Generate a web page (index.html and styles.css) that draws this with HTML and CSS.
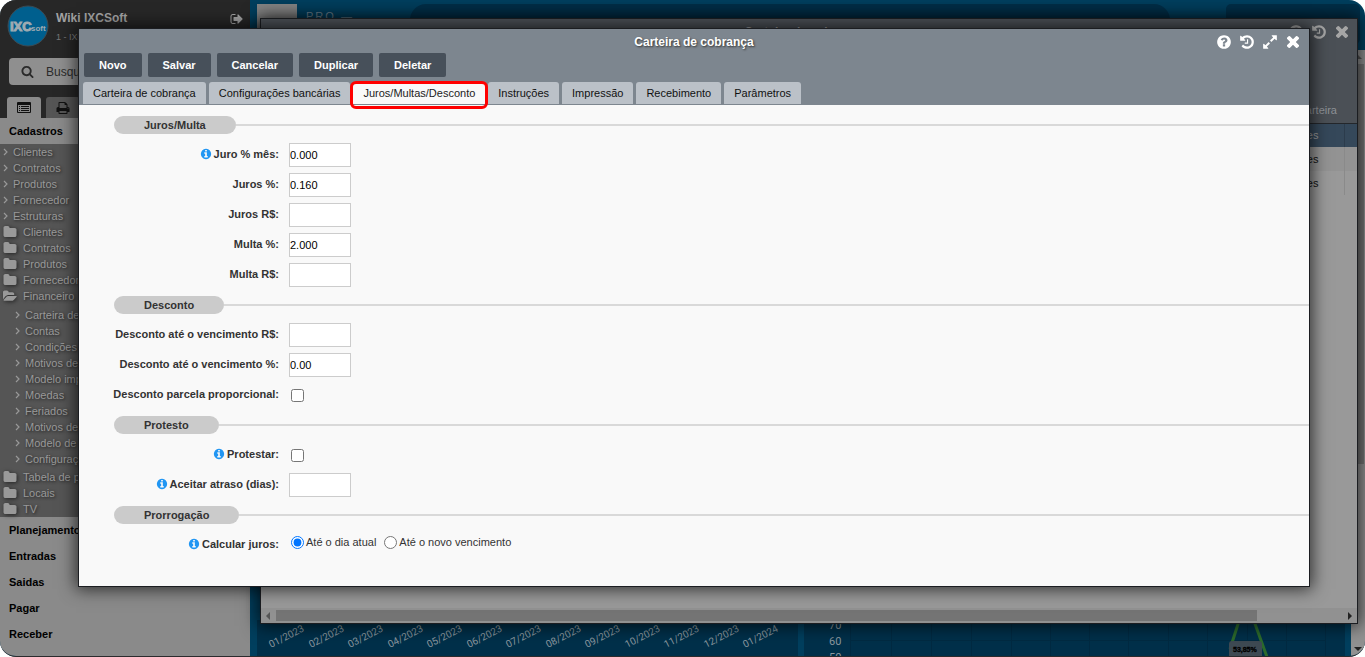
FILE: index.html
```html
<!DOCTYPE html>
<html lang="pt-BR">
<head>
<meta charset="utf-8">
<meta name="viewport" content="width=device-width, initial-scale=1">
<title>Carteira de cobrança</title>
<link rel="stylesheet" href="styles.css">
</head>
<body>
<svg class="sprite" aria-hidden="true">
  <symbol id="i-help" viewBox="0 0 1792 1792"><path d="M1024 1376v-192q0-14-9-23t-23-9h-192q-14 0-23 9t-9 23v192q0 14 9 23t23 9h192q14 0 23-9t9-23zm256-672q0-88-55.500-163t-138.500-116-170-41q-243 0-371 213-15 24 8 42l132 100q7 6 19 6 16 0 25-12 53-68 86-92 34-24 86-24 48 0 85.500 26t37.500 59q0 38-20 61t-68 45q-63 28-115.500 86.500t-52.500 125.500v36q0 14 9 23t23 9h192q14 0 23-9t9-23q0-19 21.500-49.500t54.500-49.500q32-18 49-28.500t46-35 44.500-48 28-60.500 12.500-81zm384 192q0 209-103 385.500t-279.500 279.500-385.500 103-385.500-103-279.500-279.500-103-385.500 103-385.500 279.500-279.500 385.500-103 385.500 103 279.500 279.500 103 385.500z"/></symbol>
  <symbol id="i-info" viewBox="0 0 1792 1792"><path d="M1152 1376v-160q0-14-9-23t-23-9h-96v-512q0-14-9-23t-23-9h-320q-14 0-23 9t-9 23v160q0 14 9 23t23 9h96v320h-96q-14 0-23 9t-9 23v160q0 14 9 23t23 9h448q14 0 23-9t9-23zm-128-896v-160q0-14-9-23t-23-9h-192q-14 0-23 9t-9 23v160q0 14 9 23t23 9h192q14 0 23-9t9-23zm640 416q0 209-103 385.500t-279.500 279.500-385.500 103-385.500-103-279.500-279.500-103-385.500 103-385.500 279.500-279.500 385.500-103 385.500 103 279.500 279.500 103 385.500z"/></symbol>
  <symbol id="i-history" viewBox="0 0 1792 1792"><path d="M1664 896q0 156-61 298t-164 245-245 164-298 61q-172 0-327-72.500t-264-204.500q-7-10-6.500-22.500t8.500-20.500l137-138q10-9 25-9 16 2 23 12 73 95 179 147t225 52q104 0 198.500-40.500t163.500-109.500 109.500-163.500 40.500-198.500-40.500-198.500-109.500-163.500-163.500-109.500-198.500-40.500q-98 0-188 35.500t-160 101.500l137 138q31 30 14 69-17 40-59 40h-448q-26 0-45-19t-19-45v-448q0-42 40-59 39-17 69 14l130 129q107-101 244.500-156.500t284.500-55.500q156 0 298 61t245 164 164 245 61 298zm-640-288v448q0 14-9 23t-23 9h-320q-14 0-23-9t-9-23v-64q0-14 9-23t23-9h224v-352q0-14 9-23t23-9h64q14 0 23 9t9 23z"/></symbol>
  <symbol id="i-times" viewBox="112 176 1568 1568"><path d="M1490 1322q0 40-28 68l-136 136q-28 28-68 28t-68-28l-294-294-294 294q-28 28-68 28t-68-28l-136-136q-28-28-28-68t28-68l294-294-294-294q-28-28-28-68t28-68l136-136q28-28 68-28t68 28l294 294 294-294q28-28 68-28t68 28l136 136q28 28 28 68t-28 68l-294 294 294 294q28 28 28 68z"/></symbol>
  <symbol id="i-expand" viewBox="0 0 1792 1792"><path d="M883 1056q0 13-10 23l-332 332 144 144q19 19 19 45t-19 45-45 19h-448q-26 0-45-19t-19-45v-448q0-26 19-45t45-19 45 19l144 144 332-332q10-10 23-10t23 10l114 114q10 10 10 23zm781-864v448q0 26-19 45t-45 19-45-19l-144-144-332 332q-10 10-23 10t-23-10l-114-114q-10-10-10-23t10-23l332-332-144-144q-19-19-19-45t19-45 45-19h448q26 0 45 19t19 45z"/></symbol>
  <symbol id="i-exit" viewBox="0 0 1792 1792"><path d="M704 1440q0 4 1 20t.500 26.500-3 23.500-10 19.500-20.500 6.500h-320q-119 0-203.500-84.500t-84.500-203.500v-704q0-119 84.500-203.500t203.500-84.500h320q13 0 22.500 9.500t9.500 22.500q0 4 1 20t.500 26.500-3 23.500-10 19.500-20.500 6.500h-320q-66 0-113 47t-47 113v704q0 66 47 113t113 47h312l11.500 1 11.500 3 8 5.500 7 9 2 13.500zm928-544q0 26-19 45l-544 544q-19 19-45 19t-45-19-19-45v-288h-448q-26 0-45-19t-19-45v-384q0-26 19-45t45-19h448v-288q0-26 19-45t45-19 45 19l544 544q19 19 19 45z"/></symbol>
  <symbol id="i-search" viewBox="0 0 1792 1792"><path d="M1216 832q0-185-131.500-316.500t-316.500-131.500-316.500 131.500-131.500 316.500 131.500 316.500 316.500 131.500 316.500-131.500 131.500-316.500zm512 832q0 52-38 90t-90 38q-54 0-90-38l-343-342q-179 124-399 124-143 0-273.500-55.500t-225-150-150-225-55.500-273.500 55.500-273.500 150-225 225-150 273.500-55.500 273.500 55.500 225 150 150 225 55.500 273.500q0 220-124 399l343 343q37 37 37 90z"/></symbol>
  <symbol id="i-print" viewBox="0 0 1792 1792"><path d="M448 1536h896v-256h-896v256zm0-640h896v-384h-160q-40 0-68-28t-28-68v-160h-640v640zm1152 64q0-26-19-45t-45-19-45 19-19 45 19 45 45 19 45-19 19-45zm128 0v416q0 13-9.500 22.500t-22.500 9.500h-224v160q0 40-28 68t-68 28h-960q-40 0-68-28t-28-68v-160h-224q-13 0-22.500-9.500t-9.500-22.500v-416q0-79 56.500-135.500t135.500-56.500h64v-544q0-40 28-68t68-28h672q40 0 88 20t76 48l152 152q28 28 48 76t20 88v256h64q79 0 135.500 56.500t56.500 135.500z"/></symbol>
  <symbol id="i-list" viewBox="0 0 14 12"><path fill-rule="evenodd" d="M1 0h12a1 1 0 0 1 1 1v9a1 1 0 0 1-1 1H1a1 1 0 0 1-1-1V1a1 1 0 0 1 1-1zM1 3v7h12V3zM2 4h1v1H2zM4 4h8v1H4zM2 6h1v1H2zM4 6h8v1H4zM2 8h1v1H2zM4 8h8v1H4z"/></symbol>
  <symbol id="i-folder" viewBox="0 0 1792 1792"><path d="M1728 608v704q0 92-66 158t-158 66h-1216q-92 0-158-66t-66-158v-960q0-92 66-158t158-66h320q92 0 158 66t66 158v32h672q92 0 158 66t66 158z"/></symbol>
  <symbol id="i-open" viewBox="0 0 1920 1792"><path d="M1879 952q0 31-31 66l-336 396q-43 51-120.500 86.500t-143.500 35.500h-1088q-34 0-60.500-13t-26.500-43q0-31 31-66l336-396q43-51 120.500-86.500t143.500-35.500h1088q34 0 60.500 13t26.500 43zm-343-344v160h-832q-94 0-197 47.500t-164 119.500l-337 396-5 6q0-4-.500-12.500t-.500-12.500v-960q0-92 66-158t158-66h320q92 0 158 66t66 158v32h544q92 0 158 66t66 158z"/></symbol>
  <symbol id="i-angle" viewBox="0 0 6 8"><path d="M1 1l3 3-3 3" fill="none" stroke="currentColor" stroke-width="1.2"/></symbol>
</svg>

<div class="app">
  <aside class="sidebar">
    <header class="profile">
      <svg class="logo" viewBox="0 0 42 42" role="img" aria-label="IXCsoft">
        <circle cx="21" cy="21" r="20" fill="#005f8e" stroke="#3c4a52"/>
        <text x="3" y="26" class="logo-main">IXC</text>
        <text x="24" y="26" class="logo-sub">soft</text>
      </svg>
      <div class="who">
        <strong>Wiki IXCSoft</strong>
        <small>1 - IXCSoft</small>
      </div>
      <button class="icon-btn exit" aria-label="Sair"><svg><use href="#i-exit"/></svg></button>
    </header>
    <div class="search-row">
      <label class="search">
        <svg><use href="#i-search"/></svg>
        <input type="text" placeholder="Busque aqui" aria-label="Busque">
      </label>
    </div>
    <div class="side-tabs">
      <button class="side-tab current" aria-label="Menu"><svg><use href="#i-list"/></svg></button>
      <button class="side-tab" aria-label="Imprimir"><svg><use href="#i-print"/></svg></button>
    </div>
    <a class="group" href="#">Cadastros</a>
    <nav class="tree">
      <a class="leaf" href="#"><svg><use href="#i-angle"/></svg>Clientes</a>
      <a class="leaf" href="#"><svg><use href="#i-angle"/></svg>Contratos</a>
      <a class="leaf" href="#"><svg><use href="#i-angle"/></svg>Produtos</a>
      <a class="leaf" href="#"><svg><use href="#i-angle"/></svg>Fornecedor</a>
      <a class="leaf" href="#"><svg><use href="#i-angle"/></svg>Estruturas</a>
      <a class="folder" href="#"><svg><use href="#i-folder"/></svg>Clientes</a>
      <a class="folder" href="#"><svg><use href="#i-folder"/></svg>Contratos</a>
      <a class="folder" href="#"><svg><use href="#i-folder"/></svg>Produtos</a>
      <a class="folder" href="#"><svg><use href="#i-folder"/></svg>Fornecedor</a>
      <a class="folder" href="#"><svg><use href="#i-open"/></svg>Financeiro</a>
      <div class="branch">
        <a class="leaf" href="#"><svg><use href="#i-angle"/></svg>Carteira de cobrança</a>
        <a class="leaf" href="#"><svg><use href="#i-angle"/></svg>Contas</a>
        <a class="leaf" href="#"><svg><use href="#i-angle"/></svg>Condições</a>
        <a class="leaf" href="#"><svg><use href="#i-angle"/></svg>Motivos de</a>
        <a class="leaf" href="#"><svg><use href="#i-angle"/></svg>Modelo impressão</a>
        <a class="leaf" href="#"><svg><use href="#i-angle"/></svg>Moedas</a>
        <a class="leaf" href="#"><svg><use href="#i-angle"/></svg>Feriados</a>
        <a class="leaf" href="#"><svg><use href="#i-angle"/></svg>Motivos de</a>
        <a class="leaf" href="#"><svg><use href="#i-angle"/></svg>Modelo de</a>
        <a class="leaf" href="#"><svg><use href="#i-angle"/></svg>Configurações</a>
      </div>
      <a class="folder" href="#"><svg><use href="#i-folder"/></svg>Tabela de preços</a>
      <a class="folder" href="#"><svg><use href="#i-folder"/></svg>Locais</a>
      <a class="folder" href="#"><svg><use href="#i-folder"/></svg>TV</a>
    </nav>
    <a class="group" href="#">Planejamento</a>
    <a class="group" href="#">Entradas</a>
    <a class="group" href="#">Saidas</a>
    <a class="group" href="#">Pagar</a>
    <a class="group" href="#">Receber</a>
  </aside>

  <main class="desk">
    <div class="topbar">
      <div class="brand-box"></div>
      <span class="brand">PRO —</span>
      <div class="bar-pill"></div>
      <div class="bar-card"></div>
    </div>
    <div class="charts">
      <svg class="chart" viewBox="0 0 541 36" preserveAspectRatio="xMinYMax slice">
        <g class="ticks dates">
          <text transform="translate(14 28) rotate(-27)">01/2023</text>
          <text transform="translate(54 28) rotate(-27)">02/2023</text>
          <text transform="translate(93 28) rotate(-27)">03/2023</text>
          <text transform="translate(133 28) rotate(-27)">04/2023</text>
          <text transform="translate(172 28) rotate(-27)">05/2023</text>
          <text transform="translate(212 28) rotate(-27)">06/2023</text>
          <text transform="translate(251 28) rotate(-27)">07/2023</text>
          <text transform="translate(291 28) rotate(-27)">08/2023</text>
          <text transform="translate(330 28) rotate(-27)">09/2023</text>
          <text transform="translate(370 28) rotate(-27)">10/2023</text>
          <text transform="translate(409 28) rotate(-27)">11/2023</text>
          <text transform="translate(449 28) rotate(-27)">12/2023</text>
          <text transform="translate(488 28) rotate(-27)">01/2024</text>
        </g>
      </svg>
      <svg class="chart" viewBox="0 0 541 36" preserveAspectRatio="xMinYMax slice">
        <path class="grid" d="M46 20.500h476M46.500 0v36M87.500 0v36M127.500 0v36M167.500 0v36M207.500 0v36M246.500 0v36M285.500 0v36M324.500 0v36M364.500 0v36M403.500 0v36M443.500 0v36M482.500 0v36M521.500 0v36"/>
        <g class="ticks">
          <text x="25" y="9">70</text>
          <text x="25" y="25">60</text>
          <text x="25" y="41">50</text>
        </g>
        <path d="M435 1l-9 28M450 1l13 36" fill="none" stroke="#2c6b2c" stroke-width="3"/>
        <rect x="425" y="21" width="33" height="18" rx="3" fill="#3e4a53"/>
        <text class="tip" x="429" y="32">53,85%</text>
      </svg>
    </div>
  </main>
  <div class="page-scroll"><i class="arrow up"></i><div class="page-thumb"></div><i class="arrow down"></i></div>

  <section class="window list-window" aria-label="Carteiras">
    <header class="list-head">
      <h2>Carteira de cobrança</h2>
      <div class="tools">
        <button class="icon-btn" aria-label="Ajuda"><svg><use href="#i-help"/></svg></button>
        <button class="icon-btn" aria-label="Histórico"><svg><use href="#i-history"/></svg></button>
        <button class="icon-btn" aria-label="Fechar"><svg><use href="#i-times"/></svg></button>
      </div>
    </header>
    <table class="rows">
      <thead><tr><th>carteira</th><th class="end"></th></tr></thead>
      <tbody>
        <tr class="picked"><td>Clientes</td><td class="end"></td></tr>
        <tr class="odd"><td>Clientes</td><td class="end"></td></tr>
        <tr><td>Clientes</td><td class="end"></td></tr>
      </tbody>
    </table>
    <div class="hscroll"><i class="arrow left"></i><div class="track"><div class="hthumb"></div></div><i class="arrow right"></i></div>
  </section>

  <section class="window form-window" role="dialog" aria-labelledby="dlg-title">
    <header class="form-head">
      <div class="titlebar">
        <h1 id="dlg-title">Carteira de cobrança</h1>
        <div class="tools">
          <button class="icon-btn" aria-label="Ajuda"><svg><use href="#i-help"/></svg></button>
          <button class="icon-btn" aria-label="Histórico"><svg><use href="#i-history"/></svg></button>
          <button class="icon-btn" aria-label="Expandir"><svg><use href="#i-expand"/></svg></button>
          <button class="icon-btn" aria-label="Fechar"><svg><use href="#i-times"/></svg></button>
        </div>
      </div>
      <div class="actions">
        <button>Novo</button>
        <button>Salvar</button>
        <button>Cancelar</button>
        <button>Duplicar</button>
        <button>Deletar</button>
      </div>
      <div class="tabs" role="tablist">
        <button role="tab">Carteira de cobrança</button>
        <button role="tab">Configurações bancárias</button>
        <button role="tab" aria-selected="true" class="active">Juros/Multas/Desconto</button>
        <button role="tab">Instruções</button>
        <button role="tab">Impressão</button>
        <button role="tab">Recebimento</button>
        <button role="tab">Parâmetros</button>
      </div>
    </header>
    <form class="form">
      <h3 class="section"><span>Juros/Multa</span></h3>
      <div class="field"><label for="f1"><svg class="info"><use href="#i-info"/></svg>Juro % mês:</label><input id="f1" type="text" value="0.000"></div>
      <div class="field"><label for="f2">Juros %:</label><input id="f2" type="text" value="0.160"></div>
      <div class="field"><label for="f3">Juros R$:</label><input id="f3" type="text"></div>
      <div class="field"><label for="f4">Multa %:</label><input id="f4" type="text" value="2.000"></div>
      <div class="field"><label for="f5">Multa R$:</label><input id="f5" type="text"></div>
      <h3 class="section"><span>Desconto</span></h3>
      <div class="field"><label for="f6">Desconto até o vencimento R$:</label><input id="f6" type="text"></div>
      <div class="field"><label for="f7">Desconto até o vencimento %:</label><input id="f7" type="text" value="0.00"></div>
      <div class="field"><label for="f8">Desconto parcela proporcional:</label><input id="f8" type="checkbox"></div>
      <h3 class="section"><span>Protesto</span></h3>
      <div class="field"><label for="f9"><svg class="info"><use href="#i-info"/></svg>Protestar:</label><input id="f9" type="checkbox"></div>
      <div class="field"><label for="f10"><svg class="info"><use href="#i-info"/></svg>Aceitar atraso (dias):</label><input id="f10" type="text"></div>
      <h3 class="section"><span>Prorrogação</span></h3>
      <div class="field"><span class="label" id="g1"><svg class="info"><use href="#i-info"/></svg>Calcular juros:</span>
        <div class="choices" role="radiogroup" aria-labelledby="g1">
          <label><input type="radio" name="juros" checked>Até o dia atual</label>
          <label><input type="radio" name="juros">Até o novo vencimento</label>
        </div>
      </div>
    </form>
  </section>
</div>
</body>
</html>
```
FILE: styles.css
```css
* { box-sizing: border-box; }
body {
  margin: 0;
  background: #fff;
  font: 11px/16px "Liberation Sans", Arial, sans-serif;
  color: #333;
}
h1, h2, h3 { margin: 0; font-size: 12px; }
a { color: inherit; text-decoration: none; }
button, input { font: inherit; }
button { border: 0; padding: 0; background: none; color: inherit; }
svg { fill: currentColor; flex: none; }
.sprite { position: absolute; width: 0; height: 0; }

.app {
  position: relative;
  display: flex;
  height: 100vh;
  overflow: hidden;
  border-radius: 16px;
  border-bottom: 1px solid #2b2b2d;
  background: #003f5e;
}

/* Sidebar */
.sidebar {
  flex: none;
  width: 250px;
  background: #8a8a8a;
  white-space: nowrap;
  overflow: hidden;
}
.profile {
  display: flex;
  align-items: flex-start;
  height: 58px;
  padding: 5px 5px 0 7px;
  background: #272727;
  color: #a3a3a3;
}
.logo { width: 42px; height: 42px; }
.logo-main { font: bold 13px "Liberation Sans", Arial, sans-serif; fill: #9eabb2; stroke: #9eabb2; stroke-width: 1; }
.logo-sub { font: bold 8px "Liberation Sans", Arial, sans-serif; fill: #9eabb2; }
.who { flex: 1; display: flex; flex-direction: column; padding: 5px 0 0 7px; }
.who strong { font-size: 12px; }
.who small { font-size: 9px; line-height: 22px; color: #777; }
.icon-btn { display: flex; align-items: center; justify-content: center; width: 16px; height: 16px; }
.icon-btn svg { width: 16px; height: 16px; }
.exit { margin-top: 6px; }
.exit svg { width: 14px; height: 14px; }
.search-row { padding: 0 9px; background: #272727; }
.search {
  display: flex;
  align-items: center;
  gap: 12px;
  height: 27px;
  padding-left: 12px;
  border-radius: 4px;
  background: #8f8f8f;
  color: #2b2b2b;
}
.search svg { width: 13px; height: 13px; }
.search input { width: 150px; border: 0; padding: 0; background: none; font-size: 12px; }
.search input::placeholder { color: #2b2b2b; opacity: 1; }
.side-tabs {
  display: flex;
  gap: 5px;
  padding: 12px 7px 0;
  height: 33px;
  background: #272727;
}
.side-tab {
  display: flex;
  align-items: center;
  justify-content: center;
  width: 34px;
  height: 21px;
  border-radius: 3px 3px 0 0;
  background: #555;
  color: #111;
}
.side-tab.current { background: #8a8a8a; }
.side-tab svg { width: 14px; height: 14px; }
.side-tab.current svg { height: 12px; }
.group { display: block; padding-left: 9px; line-height: 26px; font-weight: bold; color: #000; }
.tree { background: #555; color: #999; }
.tree a { display: flex; align-items: center; height: 16px; text-shadow: 1px 1px 3px #222; }
.leaf { gap: 4px; padding-left: 3px; }
.leaf svg { width: 6px; height: 8px; }
.folder { gap: 6px; padding-left: 3px; }
.folder svg { width: 14px; height: 14px; filter: drop-shadow(1px 1px 2px #222); }
.branch { padding: 3px 0 2px 12px; }

/* Desktop behind the windows */
.desk { flex: 1; min-width: 0; display: flex; flex-direction: column; justify-content: space-between; padding: 4px 6px 0 7px; }
.topbar { display: flex; align-items: flex-start; height: 46px; margin-right: -15px; }
.brand-box { width: 40px; height: 40px; background: #858585; }
.brand { width: 113px; padding: 4px 0 0 9px; letter-spacing: 2px; white-space: nowrap; color: #6d8290; }
.bar-pill { flex: 1; height: 40px; border-radius: 16px; background: #002f49; margin-right: 56px; }
.bar-card { width: 134px; height: 40px; border-radius: 5px; background: #002f49; }
.charts { display: flex; gap: 6px; }
.chart { flex: 1 1 0; min-width: 0; height: 36px; background: #00304a; }
.ticks { font: 11px Roboto, sans-serif; fill: #8b979f; }
.dates { font-size: 10px; }
.grid { fill: none; stroke: #002a42; }
.tip { font: bold 7px "Liberation Sans", Arial, sans-serif; fill: #000; stroke: #000; stroke-width: 0.3; }
.page-scroll {
  display: flex;
  flex-direction: column;
  align-items: center;
  flex: none;
  width: 14px;
  margin-top: 50px;
  padding: 5px 0 5px;
  background: #919191;
}
.page-thumb { width: 12px; height: 400px; margin: 5px 0 auto; background: #747474; }
.arrow { width: 0; height: 0; border: 4px solid transparent; }
.arrow.up { border-top: 0; border-bottom-color: #555; }
.arrow.down { border-bottom: 0; border-top-color: #222; }
.arrow.left { border-left: 0; border-right-color: #555; }
.arrow.right { border-right: 0; border-left-color: #222; }

/* Windows */
.window { position: absolute; border: 1px solid #1b1d21; box-shadow: 0 0 16px 2px rgba(0, 0, 0, .7); }
.tools { display: flex; gap: 7px; }

.list-window {
  top: 18px;
  right: 7px;
  bottom: 32px;
  left: 260px;
  display: flex;
  flex-direction: column;
  background: #999;
}
.list-head { display: flex; height: 79px; padding: 5px 7px 0; background: #4b5056; color: #a5a5a5; }
.list-head h2 { flex: 1; padding-left: 52px; text-align: center; }
.rows { width: 100%; border-collapse: collapse; text-align: right; color: #111; }
.rows th { height: 25px; padding: 0 7px; font-weight: normal; color: #8e9297; background: #4b5056; border-bottom: 1px solid #24272b; }
.rows td { height: 24px; padding: 0 25px; }
.rows .end { width: 13px; padding: 0; }
.rows td.end { border-left: 1px solid #8a8a8a; }
.rows .picked { background: #35485a; color: #999; }
.rows .picked .end { border-left-color: #2c3c4c; }
.rows .odd { background: #939393; }
.hscroll { display: flex; align-items: center; gap: 6px; height: 15px; margin-top: auto; padding: 0 5px 0 5px; background: #919191; }
.track { flex: 1; }
.hthumb { width: 92%; height: 11px; background: #747474; }

.form-window { top: 28px; right: 55px; left: 78px; background: #f9f9f9; }
.form-head { background: #7d868f; border-bottom: 1px solid #7d868f; }
.titlebar { display: flex; align-items: center; height: 24px; padding: 2px 8px 0; color: #fff; }
.titlebar h1 { flex: 1; padding-left: 85px; text-align: center; text-shadow: 1px 1px 2px #333; }
.actions { display: flex; gap: 6px; padding: 0 5px; }
.actions button { height: 24px; padding: 0 15px; border-radius: 2px; background: #47505a; color: #fff; font-weight: bold; }
.tabs { display: flex; gap: 3px; padding: 5px 4px 0; }
.tabs button { height: 22px; padding: 0 10px; border-radius: 3px 3px 0 0; background: #bbc1c8; color: #111; }
.tabs .active { position: relative; background: #f9f9f9; color: #222; }
.tabs .active::after {
  content: "";
  position: absolute;
  inset: -1px -3px -5px;
  border: 3px solid #f00;
  border-radius: 6px;
}
.form { padding: 5px 0 26px; }
.section { display: flex; align-items: center; height: 30px; padding-left: 35px; font-size: 11px; }
.section span { padding: 0 30px; line-height: 18px; border-radius: 9px; background: #cbcbcb; }
.section::after { content: ""; flex: 1; height: 2px; background: #d9d9d9; }
.field { display: flex; align-items: center; gap: 10px; height: 30px; }
.field > label, .label { display: flex; justify-content: flex-end; align-items: center; gap: 2px; width: 200px; padding-bottom: 2px; font-weight: bold; }
.info { width: 12px; height: 12px; color: #2196f3; }
.field input[type="text"] { width: 62px; height: 24px; padding: 0; border: 1px solid #ccc; background: #fff; color: #000; }
.field input[type="checkbox"] { width: 13px; height: 13px; margin: 0 2px; }
.choices { display: flex; gap: 8px; padding: 0 2px 6px; }
.choices label { display: flex; align-items: center; gap: 2px; }
.choices input { width: 13px; height: 13px; margin: 0; }
```
